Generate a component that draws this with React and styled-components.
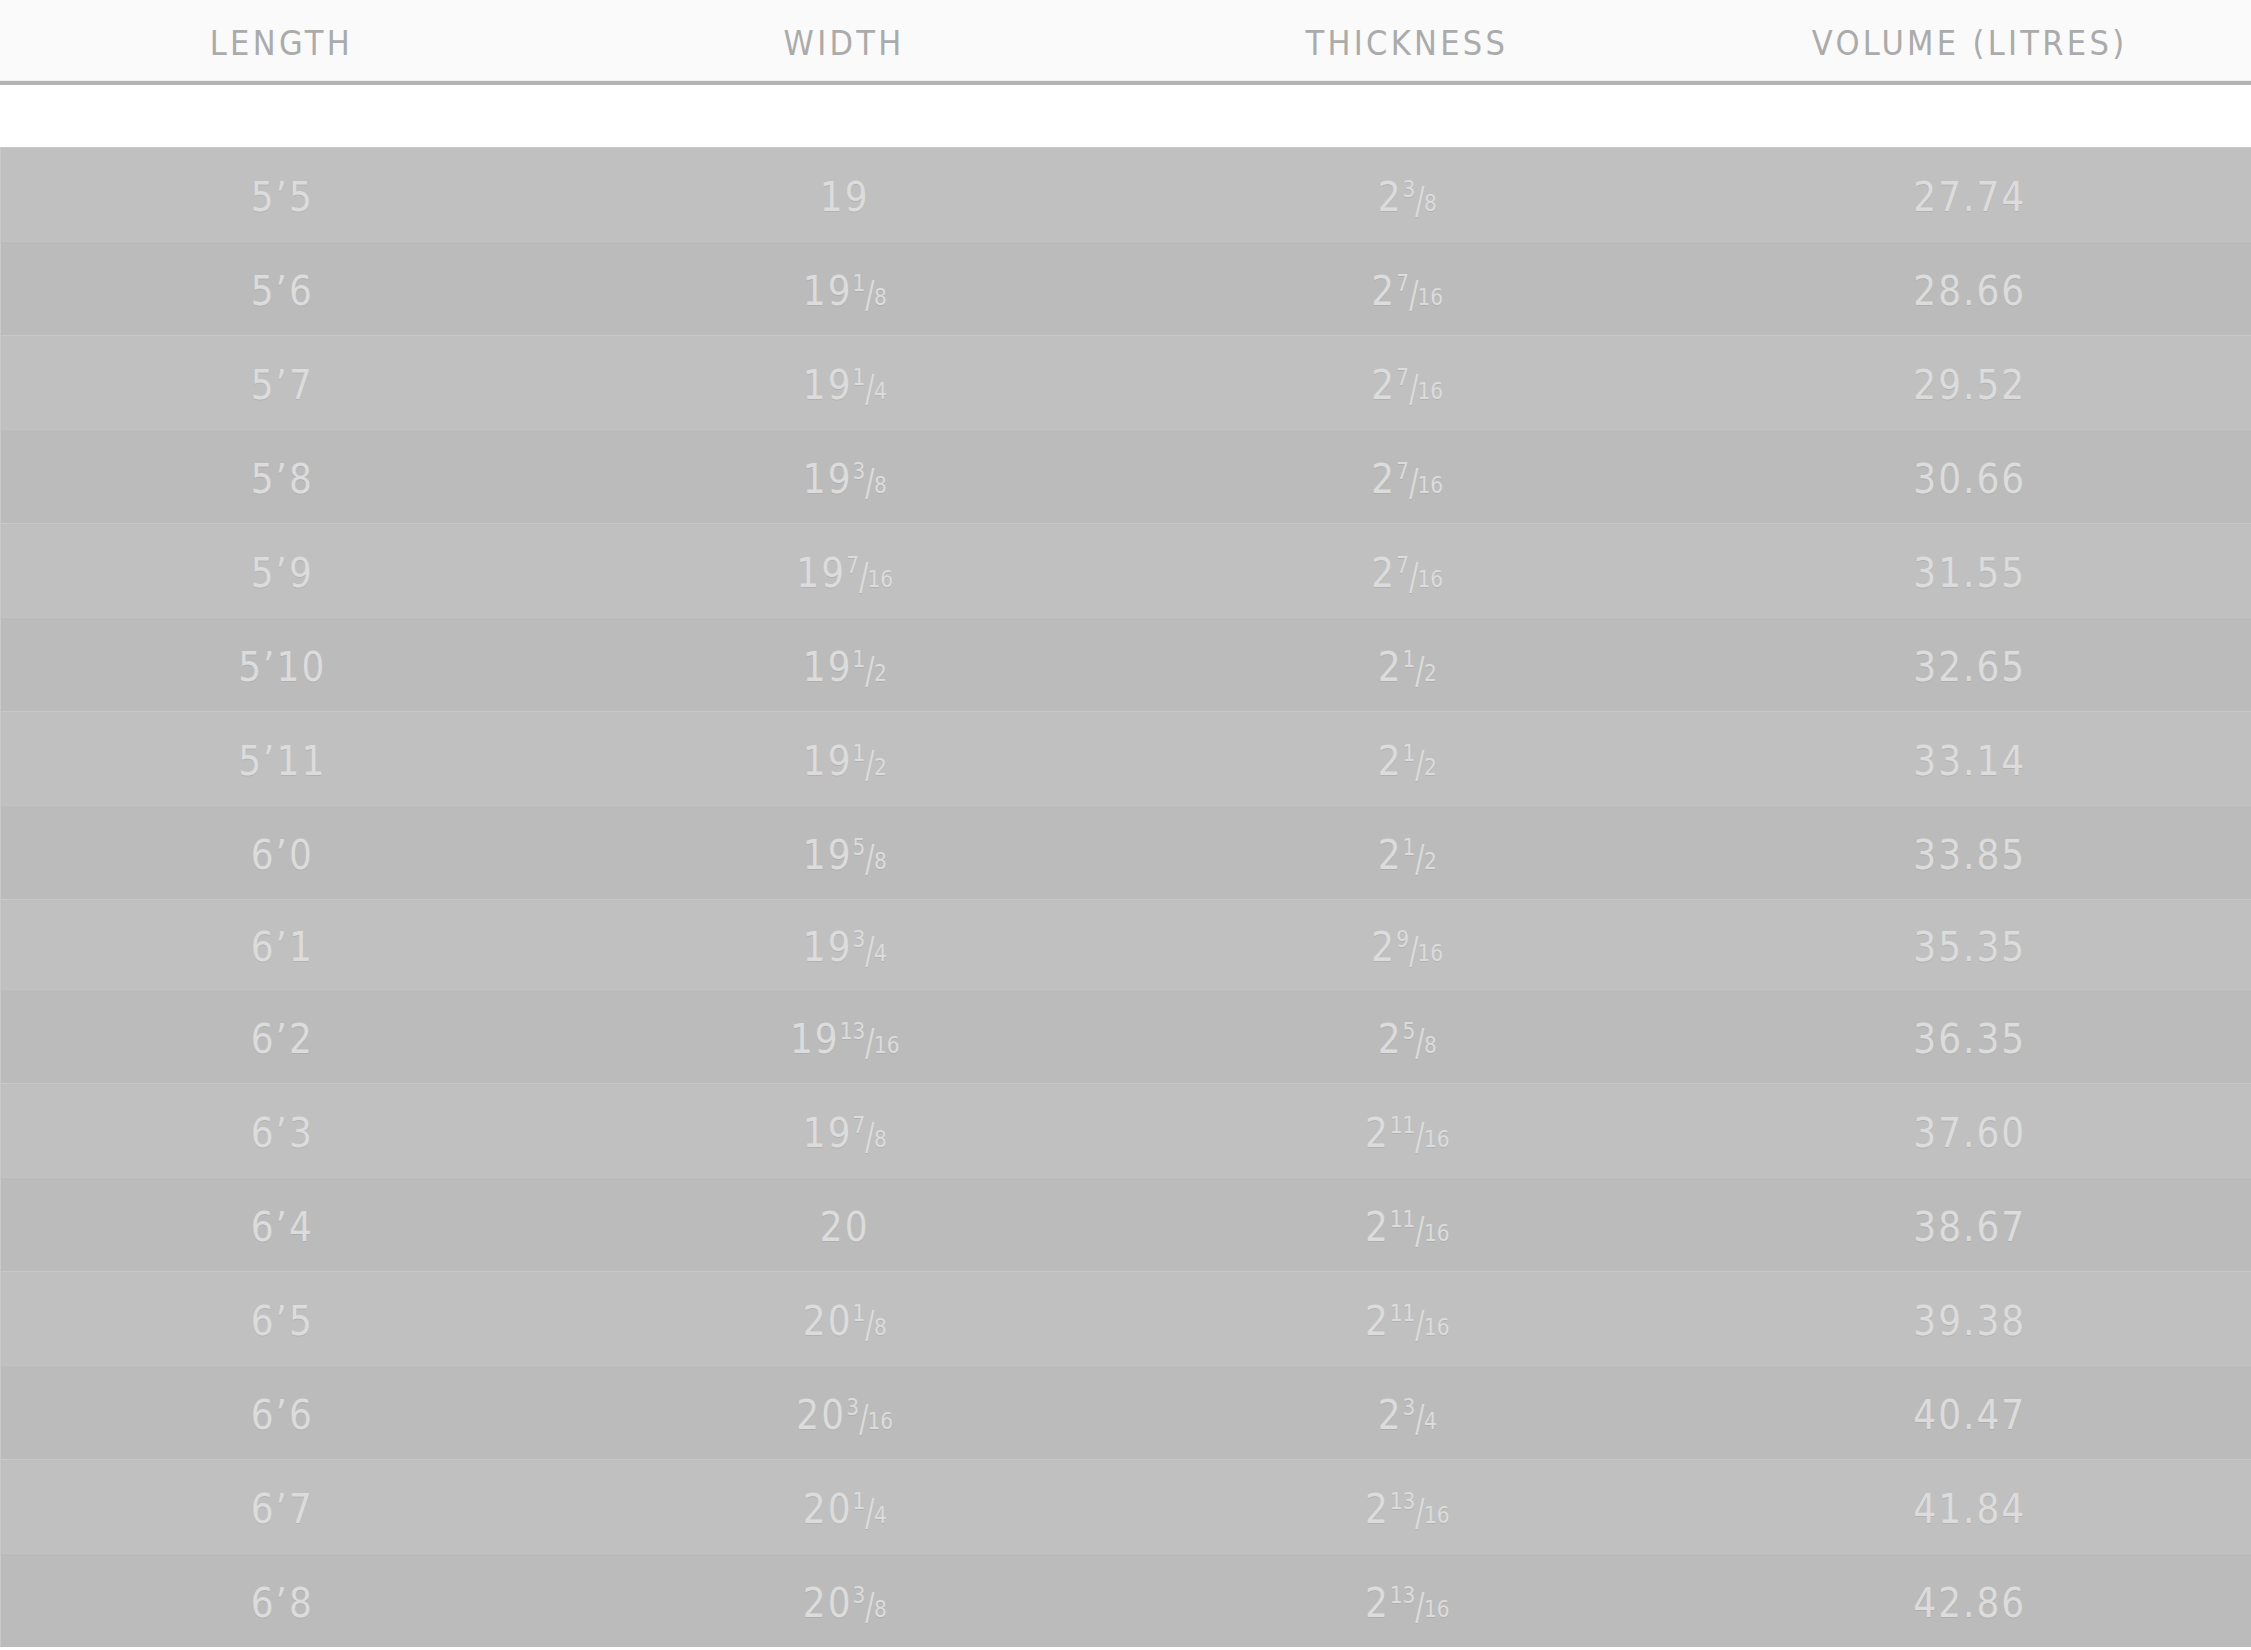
import React from "react";
import styled, { createGlobalStyle } from "styled-components";

const GlobalStyle = createGlobalStyle`
  html, body {
    margin: 0;
    padding: 0;
    background: #ffffff;
  }
  body {
    font-family: "Liberation Sans Narrow", "DejaVu Sans Condensed", "Open Sans", sans-serif;
  }
`;

const sizes = [
  ["5’5", [19], [2, 3, 8], "27.74"],
  ["5’6", [19, 1, 8], [2, 7, 16], "28.66"],
  ["5’7", [19, 1, 4], [2, 7, 16], "29.52"],
  ["5’8", [19, 3, 8], [2, 7, 16], "30.66"],
  ["5’9", [19, 7, 16], [2, 7, 16], "31.55"],
  ["5’10", [19, 1, 2], [2, 1, 2], "32.65"],
  ["5’11", [19, 1, 2], [2, 1, 2], "33.14"],
  ["6’0", [19, 5, 8], [2, 1, 2], "33.85"],
  ["6’1", [19, 3, 4], [2, 9, 16], "35.35"],
  ["6’2", [19, 13, 16], [2, 5, 8], "36.35"],
  ["6’3", [19, 7, 8], [2, 11, 16], "37.60"],
  ["6’4", [20], [2, 11, 16], "38.67"],
  ["6’5", [20, 1, 8], [2, 11, 16], "39.38"],
  ["6’6", [20, 3, 16], [2, 3, 4], "40.47"],
  ["6’7", [20, 1, 4], [2, 13, 16], "41.84"],
  ["6’8", [20, 3, 8], [2, 13, 16], "42.86"],
];

const Table = styled.div`
  width: 100%;
`;

const HeadRow = styled.div`
  display: grid;
  grid-template-columns: repeat(4, 1fr);
  align-items: center;
  height: 80px;
  background: #fafafa;
  border-bottom: 1px solid #eeeeee;
  box-shadow: 0 4px 0 #b3b3b3;
  margin-bottom: 66px;
`;

const HeadCell = styled.div`
  text-align: center;
  font-size: 34px;
  letter-spacing: 3.3px;
  color: #ababab;
  text-transform: uppercase;
  padding-top: 6px;
`;

const Body = styled.div`
  display: flex;
  flex-direction: column;
`;

const Row = styled.div`
  display: grid;
  grid-template-columns: repeat(4, 1fr);
  align-items: center;
  height: ${(p) => (p.$short ? 90 : 94)}px;
  box-sizing: border-box;
  background: ${(p) => (p.$odd ? "#c0c0c0" : "#bbbbbb")};
  border-top: 1px solid ${(p) => (p.$odd ? "#c8c8c8" : "#c3c3c3")};
  border-left: 1px solid #c9c9c9;
`;

const Cell = styled.div`
  text-align: center;
  font-size: 40px;
  letter-spacing: 2px;
  color: #dcdcdc;
  text-shadow: 0 1px 0 rgba(150, 150, 150, 0.35);
  padding-top: 4px;
`;

const Fraction = styled.span`
  letter-spacing: 0;
  white-space: nowrap;
`;

const Num = styled.span`
  font-size: 0.56em;
  position: relative;
  top: -0.62em;
`;

const Slash = styled.span`
  display: inline-block;
  font-size: 0.95em;
  margin: 0 -2px 0 -1px;
  transform: scaleX(0.8) translateY(0.06em);
`;

const Den = styled.span`
  font-size: 0.56em;
`;

function Measure({ value }) {
  const [whole, num, den] = value;
  return (
    <Cell>
      {whole}
      {num && (
        <Fraction>
          <Num>{num}</Num>
          <Slash>/</Slash>
          <Den>{den}</Den>
        </Fraction>
      )}
    </Cell>
  );
}

export default function App() {
  return (
    <>
      <GlobalStyle />
      <Table>
        <HeadRow>
          <HeadCell>Length</HeadCell>
          <HeadCell>Width</HeadCell>
          <HeadCell>Thickness</HeadCell>
          <HeadCell>Volume (Litres)</HeadCell>
        </HeadRow>
        <Body>
          {sizes.map(([length, width, thickness, volume], i) => (
            <Row key={length} $odd={i % 2 === 0} $short={length === "6’1"}>
              <Cell>{length}</Cell>
              <Measure value={width} />
              <Measure value={thickness} />
              <Cell>{volume}</Cell>
            </Row>
          ))}
        </Body>
      </Table>
    </>
  );
}
